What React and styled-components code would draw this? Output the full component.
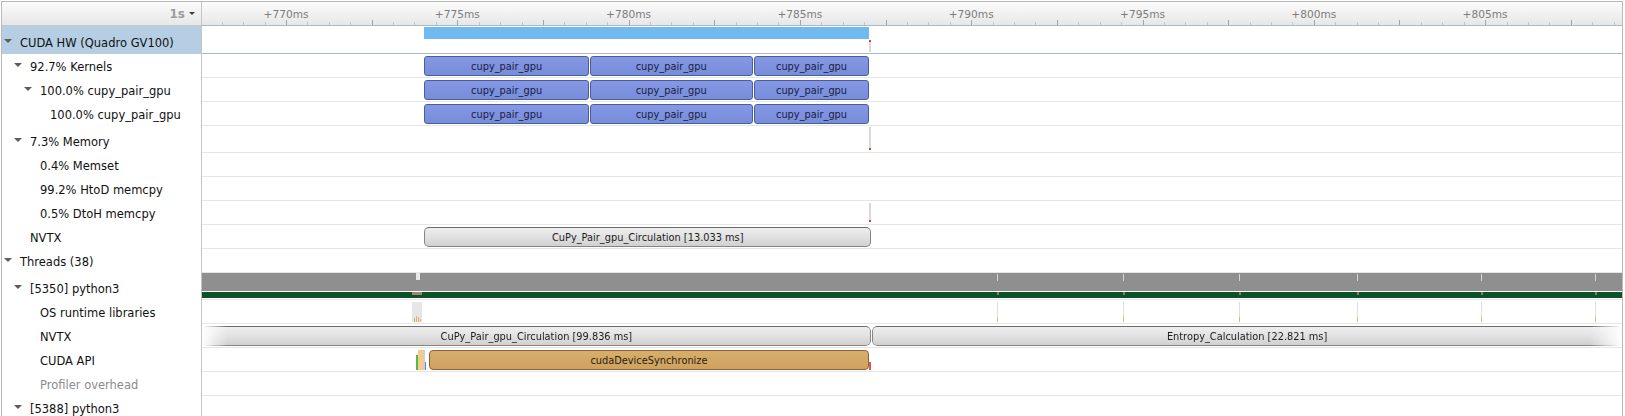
import React from 'react';
import styled, { createGlobalStyle, css } from 'styled-components';

const GlobalStyle = createGlobalStyle`
  html, body { margin: 0; padding: 0; background: #fff; overflow: hidden; height: 100%; }
  body { font-family: "DejaVu Sans", Verdana, sans-serif; }
  * { box-sizing: border-box; }
`;

/* ---- time scale ---- */
const X0 = 84; // track x of +770ms
const PX_PER_MS = 34.26;
const TRACK_W = 1420;
const toX = (ms) => X0 + (ms - 770) * PX_PER_MS;
const span = (start, end) => {
  const l = Math.max(0, toX(start));
  const r = Math.min(TRACK_W, toX(end));
  return { left: l, width: r - l };
};

/* ---- frame ---- */
const Frame = styled.div`
  margin: 1px 0 0 1px;
  width: 1622px;
  height: 415px;
  border: 1px solid #b9b9b9;
  border-bottom: none;
  overflow: hidden;
`;

const Grid = styled.div`
  display: grid;
  grid-template-columns: 200px 1fr;
`;

/* ---- header ---- */
const HeaderLeft = styled.div`
  height: 24px;
  border-right: 1px solid #c4c4c4;
  border-bottom: 1px solid #c6c6c6;
  background: linear-gradient(#fbfbfb, #e7e7e7);
  display: flex;
  align-items: center;
  justify-content: flex-end;
  padding-right: 6px;
  gap: 4px;
`;

const ZoomLabel = styled.span`
  font-weight: bold;
  font-size: 12px;
  color: #9c9c9c;
  line-height: 14px;
`;

const Caret = styled.span`
  width: 0;
  height: 0;
  border-left: 3px solid transparent;
  border-right: 3px solid transparent;
  border-top: 3px solid #3a3a3a;
`;

const Ruler = styled.div`
  position: relative;
  height: 24px;
  border-bottom: 1px solid #a7b9cb;
  background: linear-gradient(#fbfbfb, #e7e7e7);
`;

const RulerTicks = styled.svg`
  position: absolute;
  left: 0;
  bottom: 0;
`;

const RulerLabel = styled.span`
  position: absolute;
  top: 5px;
  transform: translateX(-50%);
  font-size: 10.6px;
  line-height: 14px;
  color: #7c7c7c;
  white-space: nowrap;
`;

/* ---- rows ---- */
const LabelCell = styled.div`
  display: flex;
  align-items: flex-end;
  padding-left: ${(p) => 2 + p.$level * 10}px;
  padding-bottom: 1px;
  border-right: 1px solid #c4c4c4;
  background: ${(p) => (p.$selected ? '#b5cee4' : '#fff')};
  font-size: 11.5px;
  line-height: 20px;
  color: ${(p) => (p.$muted ? '#8c8c8c' : '#111')};
  white-space: nowrap;
`;

const Toggle = styled.span`
  width: 16px;
  height: 20px;
  flex: none;
  display: flex;
  align-items: center;
`;

const Triangle = styled.span`
  width: 0;
  height: 0;
  margin-bottom: 4px;
  border-left: 4px solid transparent;
  border-right: 4px solid transparent;
  border-top: 4px solid #5c5c5c;
`;

const Track = styled.div`
  position: relative;
  height: ${(p) => p.$h + 1}px;
  border-bottom: 1px solid ${(p) => (p.$accent ? '#a7b9cb' : '#e6e6e6')};
  overflow: hidden;
`;

/* ---- bars ---- */
const barVariants = {
  kernel: css`
    background: linear-gradient(#8498e6, #788dda);
    border: 1px solid #4c5d9b;
    border-radius: 3px;
    color: #18203e;
  `,
  nvtx: css`
    background: linear-gradient(#eeeeee, #e0e0e0 55%, #d0d0d0);
    border: 1px solid #858585;
    border-top-color: #6c6c6c;
    border-radius: 5px;
    color: #1c1c1c;
  `,
  api: css`
    background: linear-gradient(#d8ae6c, #cfa25e);
    border: 1px solid #866536;
    border-radius: 4px;
    color: #2a1e0c;
  `,
};

const fades = {
  left: css`
    mask-image: linear-gradient(to right, transparent 0, #000 26px);
    -webkit-mask-image: linear-gradient(to right, transparent 0, #000 26px);
  `,
  right: css`
    mask-image: linear-gradient(to left, transparent 0, #000 32px);
    -webkit-mask-image: linear-gradient(to left, transparent 0, #000 32px);
  `,
};

const Bar = styled.div`
  position: absolute;
  top: 2px;
  height: 20px;
  display: flex;
  align-items: center;
  justify-content: center;
  font-size: 9.8px;
  white-space: nowrap;
  overflow: hidden;
  ${(p) => barVariants[p.$variant]}
  ${(p) => p.$fade && fades[p.$fade]}
`;

const SummaryBar = styled.div`
  position: absolute;
  top: 1px;
  height: 12px;
  background: #70b9f1;
`;

/* end-of-range marker: a faint line with a red dot */
const EndLine = styled.div`
  position: absolute;
  left: ${(p) => p.$x}px;
  top: ${(p) => p.$top}px;
  height: ${(p) => p.$h}px;
  width: 1.5px;
  background: #d9d9d9;
`;

const EndDot = styled.div`
  position: absolute;
  left: ${(p) => p.$x}px;
  top: ${(p) => p.$top}px;
  width: 2px;
  height: 2px;
  background: #e23a3a;
`;

const EndStub = styled.div`
  position: absolute;
  left: ${(p) => p.$x}px;
  top: 14px;
  width: 2px;
  height: 8px;
  background: #e05656;
`;

/* thread state row */
const ThreadBands = styled.div`
  display: flex;
  flex-direction: column;
  gap: 1px;
`;

const StateBand = styled.div`
  height: 18px;
  background: #8f8f8f;
`;

const ActivityBand = styled.div`
  height: 6px;
  background: #0b5229;
`;

const StateNotch = styled.div`
  position: absolute;
  left: 214px;
  top: 0;
  width: 4px;
  height: 7px;
  background: #e9e9e9;
`;

const ActivityBlip = styled.div`
  position: absolute;
  left: 210px;
  top: 19px;
  width: 10px;
  height: 3px;
  background: #a4836f;
`;

const StateTick = styled.div`
  position: absolute;
  left: ${(p) => p.$x}px;
  top: 1px;
  width: 1px;
  height: 7px;
  background: #d6d6d6;
`;

const ActivityTick = styled.div`
  position: absolute;
  left: ${(p) => p.$x}px;
  top: 19px;
  width: 2px;
  height: 3px;
  background: #8d7a62;
`;

/* OS runtime row */
const OsBlock = styled.div`
  position: absolute;
  left: 210px;
  top: 2px;
  width: 10px;
  height: 20px;
  background: #e6e6e6;
  display: flex;
  align-items: flex-end;
  gap: 1px;
  padding-left: 2px;
`;

const OsSpike = styled.span`
  width: 1px;
  height: ${(p) => p.$h}px;
  background: #e2b070;
`;

const OsCall = styled.div`
  position: absolute;
  left: ${(p) => p.$x}px;
  top: 2px;
  width: 1.5px;
  height: 20px;
  background: linear-gradient(#dedede 75%, #e4b67c 75%);
`;

/* CUDA API row slivers before the sync call */
const ApiSlivers = styled.div`
  position: absolute;
  left: 214px;
  top: 2px;
  height: 20px;
  display: flex;
  align-items: flex-end;
`;

const Sliver = styled.span`
  width: ${(p) => p.$w}px;
  height: ${(p) => p.$h}px;
  background: ${(p) => p.$c};
`;

/* ---- data ---- */
const KERNELS = [
  { start: 774.03, end: 778.85, name: 'cupy_pair_gpu' },
  { start: 778.87, end: 783.62, name: 'cupy_pair_gpu' },
  { start: 783.66, end: 787.02, name: 'cupy_pair_gpu' },
];

const END_MS = 787.03;
const END_X = toX(END_MS);
const THREAD_TICKS = [794.7, 920.7, 1036.7, 1154.7, 1278.7, 1392.7];

const ROWS = [
  { label: 'CUDA HW (Quadro GV100)', level: 0, open: true, selected: true, h: 27, accent: true, content: 'hw' },
  { label: '92.7% Kernels', level: 1, open: true, content: 'kernels' },
  { label: '100.0% cupy_pair_gpu', level: 2, open: true, content: 'kernels' },
  { label: '100.0% cupy_pair_gpu', level: 3, content: 'kernels' },
  { label: '7.3% Memory', level: 1, open: true, h: 26, content: 'memory' },
  { label: '0.4% Memset', level: 2 },
  { label: '99.2% HtoD memcpy', level: 2 },
  { label: '0.5% DtoH memcpy', level: 2, content: 'dtoh' },
  { label: 'NVTX', level: 1, content: 'hwNvtx' },
  { label: 'Threads (38)', level: 0, open: true },
  { label: '[5350] python3', level: 1, open: true, h: 26, content: 'thread' },
  { label: 'OS runtime libraries', level: 2, content: 'osrt' },
  { label: 'NVTX', level: 2, content: 'threadNvtx' },
  { label: 'CUDA API', level: 2, content: 'api' },
  { label: 'Profiler overhead', level: 2, muted: true },
  { label: '[5388] python3', level: 1, open: true },
];

function EndMarker({ lineTop, lineH, dotTop }) {
  return (
    <>
      <EndLine $x={END_X} $top={lineTop} $h={lineH} />
      <EndDot $x={END_X} $top={dotTop} />
    </>
  );
}

function TrackContent({ type }) {
  switch (type) {
    case 'hw':
      return (
        <>
          <SummaryBar style={span(774.03, END_MS)} />
          <EndMarker lineTop={15} lineH={11} dotTop={14} />
        </>
      );
    case 'kernels':
      return KERNELS.map((k, i) => (
        <Bar key={i} $variant="kernel" style={span(k.start, k.end)}>
          {k.name}
        </Bar>
      ));
    case 'memory':
      return <EndMarker lineTop={1} lineH={21} dotTop={22} />;
    case 'dtoh':
      return <EndMarker lineTop={2} lineH={18} dotTop={19} />;
    case 'hwNvtx':
      return (
        <Bar $variant="nvtx" style={span(774.03, 787.09)}>
          CuPy_Pair_gpu_Circulation [13.033 ms]
        </Bar>
      );
    case 'thread':
      return (
        <>
          <ThreadBands>
            <StateBand />
            <ActivityBand />
          </ThreadBands>
          <StateNotch />
          <ActivityBlip />
          {THREAD_TICKS.map((x) => (
            <React.Fragment key={x}>
              <StateTick $x={x} />
              <ActivityTick $x={x} />
            </React.Fragment>
          ))}
        </>
      );
    case 'osrt':
      return (
        <>
          <OsBlock>
            <OsSpike $h={4} />
            <OsSpike $h={6} />
            <OsSpike $h={5} />
            <OsSpike $h={3} />
          </OsBlock>
          {THREAD_TICKS.map((x) => (
            <OsCall key={x} $x={x} />
          ))}
        </>
      );
    case 'threadNvtx':
      return (
        <>
          <Bar $variant="nvtx" $fade="left" style={span(755, 787.07)}>
            CuPy_Pair_gpu_Circulation [99.836 ms]
          </Bar>
          <Bar $variant="nvtx" $fade="right" style={span(787.11, 812)}>
            Entropy_Calculation [22.821 ms]
          </Bar>
        </>
      );
    case 'api':
      return (
        <>
          <ApiSlivers>
            <Sliver $w={1.6} $h={15} $c="#55b84a" />
            <Sliver $w={5.7} $h={20} $c="#f7cb86" />
            <Sliver $w={1.4} $h={20} $c="#cfcfcf" />
            <Sliver $w={1.4} $h={8} $c="#5f82d2" />
          </ApiSlivers>
          <Bar $variant="api" style={span(774.16, END_MS)}>
            cudaDeviceSynchronize
          </Bar>
          <EndStub $x={END_X} />
        </>
      );
    default:
      return null;
  }
}

function RulerContent() {
  const ticks = [];
  for (let i = -4; i < 64; i++) {
    const x = toX(770 + i * 0.625);
    if (x < 0 || x > TRACK_W) continue;
    ticks.push({ i, x, major: i % 4 === 0, label: i % 8 === 0 ? 770 + i * 0.625 : null });
  }
  return (
    <>
      <RulerTicks width={TRACK_W} height={6}>
        {ticks.map((t) => (
          <rect
            key={t.i}
            x={Math.round(t.x)}
            y={t.major ? 1 : 3}
            width={1}
            height={t.major ? 5 : 3}
            fill={t.major ? '#a3a3a3' : '#c4c4c4'}
          />
        ))}
      </RulerTicks>
      {ticks
        .filter((t) => t.label !== null)
        .map((t) => (
          <RulerLabel key={t.i} style={{ left: t.x }}>
            +{t.label}ms
          </RulerLabel>
        ))}
    </>
  );
}

export default function App() {
  return (
    <>
      <GlobalStyle />
      <Frame>
        <Grid>
          <HeaderLeft>
            <ZoomLabel>1s</ZoomLabel>
            <Caret />
          </HeaderLeft>
          <Ruler>
            <RulerContent />
          </Ruler>
          {ROWS.map((r, idx) => (
            <React.Fragment key={idx}>
              <LabelCell $level={r.level} $selected={r.selected} $muted={r.muted}>
                <Toggle>{r.open && <Triangle />}</Toggle>
                {r.label}
              </LabelCell>
              <Track $h={r.h || 23} $accent={r.accent}>
                {r.content && <TrackContent type={r.content} />}
              </Track>
            </React.Fragment>
          ))}
        </Grid>
      </Frame>
    </>
  );
}
